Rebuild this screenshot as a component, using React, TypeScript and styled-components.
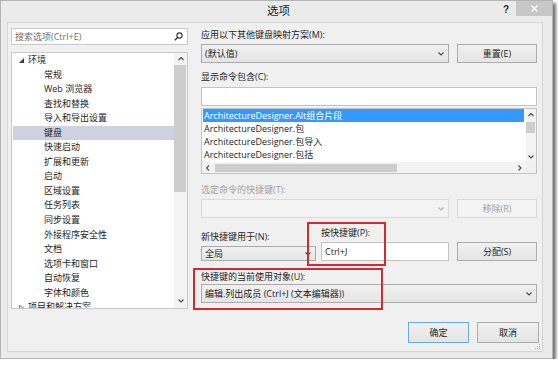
import React from 'react';
import styled, { createGlobalStyle } from 'styled-components';

const uiFont = `"Open Sans", "Noto Sans CJK SC", sans-serif`;

const GlobalStyle = createGlobalStyle`
  * {
    box-sizing: border-box;
  }
  html,
  body {
    margin: 0;
    padding: 0;
    background: #ffffff;
  }
  body {
    font-family: ${uiFont};
    font-size: 9px;
    color: #1e1e1e;
  }
`;

const Window = styled.div`
  width: 553px;
  height: 359px;
  background: #ebebeb;
  border: 1px solid #b4b4b4;
  box-shadow: 3px 3px 3px rgba(0, 0, 0, 0.55);
  display: flex;
  flex-direction: column;
`;

const TitleBar = styled.div`
  height: 21px;
  display: grid;
  grid-template-columns: 1fr auto 1fr;
  align-items: start;
`;

const Title = styled.div`
  grid-column: 2;
  padding-left: 4px;
  font-size: 11.5px;
  line-height: 19px;
  color: #1e1e1e;
`;

const Controls = styled.div`
  justify-self: end;
  display: flex;
  align-items: flex-start;
  gap: 7px;
`;

const HelpGlyph = styled.span`
  font-family: 'Liberation Sans', sans-serif;
  font-weight: bold;
  font-size: 10px;
  line-height: 17px;
  color: #2a2a2a;
`;

const CloseButton = styled.div`
  width: 36px;
  height: 15px;
  background: #c7c7c7;
  display: flex;
  align-items: center;
  justify-content: center;
`;

const Client = styled.div`
  position: relative;
  flex: 1;
  margin: 0 9px 6px 6px;
  background: #f0f0f0;
  border: 1px solid #d6d6d6;
  padding: 5px 3px 0 3px;
  display: flex;
  flex-direction: column;
`;

const Main = styled.div`
  display: grid;
  grid-template-columns: 177px 336px;
  column-gap: 13px;
  height: 281px;
`;

const LeftPanel = styled.div`
  display: flex;
  flex-direction: column;
  gap: 7px;
`;

const SearchBox = styled.div`
  height: 17px;
  background: #ffffff;
  border: 1px solid #c9c9c9;
  display: flex;
  align-items: center;
  justify-content: space-between;
  padding: 0 4px 0 3px;
  color: #6f6f6f;
`;

const Tree = styled.div`
  height: 257px;
  background: #ffffff;
  border: 1px solid #c9c9c9;
  display: grid;
  grid-template-columns: 1fr 13px;
  overflow: hidden;
`;

const TreeItems = styled.div`
  overflow: hidden;
`;

const TreeRow = styled.div<{ $level: number; $selected?: boolean }>`
  height: 14.55px;
  line-height: 14.55px;
  margin-left: 1px;
  padding-left: ${(p) => (p.$level === 0 ? 6 : 31)}px;
  display: flex;
  align-items: center;
  gap: 4px;
  white-space: nowrap;
  background: ${(p) => (p.$selected ? '#cfd0e0' : 'transparent')};
`;

const VScroll = styled.div<{ $thumbTop: number; $thumbHeight: number }>`
  display: flex;
  flex-direction: column;
  align-items: center;
  background: #f3f3f3;

  & > .thumb {
    align-self: stretch;
    margin: ${(p) => p.$thumbTop}px 1px 0 0;
    height: ${(p) => p.$thumbHeight}px;
    background: #cdcdcd;
  }
  & > .spacer {
    flex: 1;
  }
`;

const ArrowCell = styled.div<{ $size: number }>`
  width: 100%;
  height: ${(p) => p.$size}px;
  display: flex;
  align-items: center;
  justify-content: center;
  flex-shrink: 0;
`;

const RightPanel = styled.div`
  position: relative;
  display: flex;
  flex-direction: column;
`;

const Label = styled.div<{ $mt: number; $disabled?: boolean }>`
  margin-top: ${(p) => p.$mt}px;
  height: 12px;
  line-height: 12px;
  white-space: nowrap;
  color: ${(p) => (p.$disabled ? '#a3a3a3' : '#1e1e1e')};
`;

const Row = styled.div<{ $mt: number }>`
  margin-top: ${(p) => p.$mt}px;
  display: flex;
  align-items: flex-end;
  gap: 8px;
`;

const FieldGroup = styled.div<{ $width: number }>`
  width: ${(p) => p.$width}px;
  display: flex;
  flex-direction: column;
  gap: 3px;
`;

const ComboBox = styled.div<{ $mt?: number; $disabled?: boolean }>`
  flex: 1;
  margin-top: ${(p) => p.$mt ?? 0}px;
  height: 19px;
  display: flex;
  align-items: center;
  justify-content: space-between;
  padding: 0 4px 0 3px;
  border: 1px solid ${(p) => (p.$disabled ? '#d9d9d9' : '#acacac')};
  background: ${(p) =>
    p.$disabled ? '#f3f3f3' : 'linear-gradient(#f0f0f0, #e5e5e5)'};
  white-space: nowrap;
`;

const TextBox = styled.div<{ $mt?: number }>`
  margin-top: ${(p) => p.$mt ?? 0}px;
  height: 19px;
  background: #ffffff;
  border: 1px solid #c4c4c4;
  display: flex;
  align-items: center;
  padding-left: 3px;
`;

const Button = styled.div<{ $width: number; $height?: number; $disabled?: boolean; $default?: boolean }>`
  width: ${(p) => p.$width}px;
  height: ${(p) => p.$height ?? 19}px;
  flex-shrink: 0;
  display: flex;
  align-items: center;
  justify-content: center;
  border: 1px solid
    ${(p) => (p.$default ? '#69a8e8' : p.$disabled ? '#d9d9d9' : '#adadad')};
  background: ${(p) =>
    p.$disabled ? '#f3f3f3' : 'linear-gradient(#f0f0f0, #e5e5e5)'};
  color: ${(p) => (p.$disabled ? '#a3a3a3' : '#1e1e1e')};
`;

const CommandList = styled.div`
  margin-top: 2px;
  height: 66px;
  background: #ffffff;
  border: 1px solid #c4c4c4;
  display: grid;
  grid-template-columns: 1fr 10px;
  grid-template-rows: 1fr 11px;
  overflow: hidden;
`;

const CommandItems = styled.div`
  overflow: hidden;
`;

const CommandRow = styled.div<{ $selected?: boolean }>`
  height: 13px;
  line-height: 13px;
  margin: 0 2px 0 1px;
  padding-left: 1px;
  white-space: nowrap;
  background: ${(p) => (p.$selected ? '#3399ff' : 'transparent')};
  color: ${(p) => (p.$selected ? '#ffffff' : '#1e1e1e')};
`;

const HScroll = styled.div`
  display: flex;
  align-items: center;
  background: #f3f3f3;

  & > .thumb {
    margin-left: 1px;
    width: 182px;
    height: 8px;
    background: #cdcdcd;
  }
  & > .spacer {
    flex: 1;
  }
`;

const Corner = styled.div`
  background: #f0f0f0;
`;

const Highlight = styled.div<{ $left: number; $top: number; $width: number; $height: number }>`
  position: absolute;
  left: ${(p) => p.$left}px;
  top: ${(p) => p.$top}px;
  width: ${(p) => p.$width}px;
  height: ${(p) => p.$height}px;
  border: 2px solid #d42a2f;
  pointer-events: none;
`;

const Footer = styled.div`
  margin-top: 13px;
  display: flex;
  justify-content: flex-end;
  gap: 8px;
`;

const Grip = styled.div`
  position: absolute;
  right: 1px;
  bottom: 1px;
  line-height: 0;
`;

type Dir = 'up' | 'down' | 'left' | 'right';

const Chevron = ({ dir, color = '#4a4a4a' }: { dir: Dir; color?: string }) => {
  const vertical = dir === 'up' || dir === 'down';
  const points: Record<Dir, string> = {
    down: '0.5,0.5 3,3 5.5,0.5',
    up: '0.5,3 3,0.5 5.5,3',
    left: '3,0.5 0.5,3 3,5.5',
    right: '0.5,0.5 3,3 0.5,5.5',
  };
  return (
    <svg
      width={vertical ? 6 : 4}
      height={vertical ? 4 : 6}
      viewBox={vertical ? '0 0 6 4' : '0 0 4 6'}
    >
      <polyline points={points[dir]} fill="none" stroke={color} strokeWidth="1.1" />
    </svg>
  );
};

const SearchIcon = () => (
  <svg width="9" height="9" viewBox="0 0 9 9">
    <circle cx="5.5" cy="3.5" r="2.6" fill="none" stroke="#333" strokeWidth="1.1" />
    <line x1="3.6" y1="5.4" x2="0.8" y2="8.2" stroke="#333" strokeWidth="1.4" />
  </svg>
);

const Twisty = ({ open }: { open: boolean }) =>
  open ? (
    <svg width="5" height="5" viewBox="0 0 5 5">
      <polygon points="5,0 5,5 0,5" fill="#3c3c3c" />
    </svg>
  ) : (
    <svg width="5" height="6" viewBox="0 0 5 6">
      <polygon points="0.5,0.5 4.5,3 0.5,5.5" fill="none" stroke="#555" strokeWidth="0.8" />
    </svg>
  );

const treeChildren = [
  '常规',
  'Web 浏览器',
  '查找和替换',
  '导入和导出设置',
  '键盘',
  '快速启动',
  '扩展和更新',
  '启动',
  '区域设置',
  '任务列表',
  '同步设置',
  '外接程序安全性',
  '文档',
  '选项卡和窗口',
  '自动恢复',
  '字体和颜色',
];

const commands = [
  'ArchitectureDesigner.Alt组合片段',
  'ArchitectureDesigner.包',
  'ArchitectureDesigner.包导入',
  'ArchitectureDesigner.包括',
  'ArchitectureDesigner.从组合片段中删除',
];

export default function App() {
  return (
    <>
      <GlobalStyle />
      <Window>
        <TitleBar>
          <Title>选项</Title>
          <Controls>
            <HelpGlyph>?</HelpGlyph>
            <CloseButton>
              <svg width="7" height="7" viewBox="0 0 7 7">
                <line x1="0.5" y1="0.5" x2="6.5" y2="6.5" stroke="#fff" strokeWidth="1.3" />
                <line x1="6.5" y1="0.5" x2="0.5" y2="6.5" stroke="#fff" strokeWidth="1.3" />
              </svg>
            </CloseButton>
          </Controls>
        </TitleBar>

        <Client>
          <Main>
            <LeftPanel>
              <SearchBox>
                <span>搜索选项(Ctrl+E)</span>
                <SearchIcon />
              </SearchBox>
              <Tree>
                <TreeItems>
                  <TreeRow $level={0}>
                    <Twisty open />
                    <span>环境</span>
                  </TreeRow>
                  {treeChildren.map((name) => (
                    <TreeRow key={name} $level={1} $selected={name === '键盘'}>
                      {name}
                    </TreeRow>
                  ))}
                  <TreeRow $level={0}>
                    <Twisty open={false} />
                    <span>项目和解决方案</span>
                  </TreeRow>
                </TreeItems>
                <VScroll $thumbTop={0} $thumbHeight={127}>
                  <ArrowCell $size={12}>
                    <Chevron dir="up" />
                  </ArrowCell>
                  <div className="thumb" />
                  <div className="spacer" />
                  <ArrowCell $size={14}>
                    <Chevron dir="down" />
                  </ArrowCell>
                </VScroll>
              </Tree>
            </LeftPanel>

            <RightPanel>
              <Label $mt={1}>应用以下其他键盘映射方案(M):</Label>
              <Row $mt={3}>
                <ComboBox>
                  <span>(默认值)</span>
                  <Chevron dir="down" />
                </ComboBox>
                <Button $width={80}>重置(E)</Button>
              </Row>

              <Label $mt={8}>显示命令包含(C):</Label>
              <TextBox $mt={4} />
              <CommandList>
                <CommandItems>
                  {commands.map((c, i) => (
                    <CommandRow key={c} $selected={i === 0}>
                      {c}
                    </CommandRow>
                  ))}
                </CommandItems>
                <VScroll $thumbTop={2} $thumbHeight={11}>
                  <ArrowCell $size={11}>
                    <Chevron dir="up" />
                  </ArrowCell>
                  <div className="thumb" />
                  <div className="spacer" />
                  <ArrowCell $size={11}>
                    <Chevron dir="down" />
                  </ArrowCell>
                </VScroll>
                <HScroll>
                  <ArrowCell $size={11} style={{ width: 12 }}>
                    <Chevron dir="left" />
                  </ArrowCell>
                  <div className="thumb" />
                  <div className="spacer" />
                  <ArrowCell $size={11} style={{ width: 12 }}>
                    <Chevron dir="right" />
                  </ArrowCell>
                </HScroll>
                <Corner />
              </CommandList>

              <Label $mt={10} $disabled>
                选定命令的快捷键(T):
              </Label>
              <Row $mt={3}>
                <ComboBox $disabled>
                  <span />
                  <Chevron dir="down" color="#b5b5b5" />
                </ComboBox>
                <Button $width={80} $disabled>
                  移除(R)
                </Button>
              </Row>

              <Row $mt={9}>
                <FieldGroup $width={115}>
                  <Label $mt={0}>新快捷键用于(N):</Label>
                  <ComboBox>
                    <span>全局</span>
                    <Chevron dir="down" />
                  </ComboBox>
                </FieldGroup>
                <FieldGroup $width={128} style={{ marginLeft: -3 }}>
                  <Label $mt={0}>按快捷键(P):</Label>
                  <TextBox>Ctrl+J</TextBox>
                </FieldGroup>
                <Button $width={80}>分配(S)</Button>
              </Row>

              <Label $mt={10}>快捷键的当前使用对象(U):</Label>
              <ComboBox $mt={1} style={{ flex: 'none' }}>
                <span>编辑.列出成员 (Ctrl+J (文本编辑器))</span>
                <Chevron dir="down" />
              </ComboBox>

              <Highlight $left={106} $top={194} $width={79} $height={44} />
              <Highlight $left={-8} $top={240} $width={190} $height={42} />
            </RightPanel>
          </Main>

          <Footer>
            <Button $width={61} $height={21} $default>
              确定
            </Button>
            <Button $width={62} $height={21}>
              取消
            </Button>
          </Footer>

          <Grip>
            <svg width="6" height="6" viewBox="0 0 6 6">
              <rect x="4" y="0" width="1.2" height="1.2" fill="#b8b8b8" />
              <rect x="2" y="2" width="1.2" height="1.2" fill="#b8b8b8" />
              <rect x="4" y="2" width="1.2" height="1.2" fill="#b8b8b8" />
              <rect x="0" y="4" width="1.2" height="1.2" fill="#b8b8b8" />
              <rect x="2" y="4" width="1.2" height="1.2" fill="#b8b8b8" />
              <rect x="4" y="4" width="1.2" height="1.2" fill="#b8b8b8" />
            </svg>
          </Grip>
        </Client>
      </Window>
    </>
  );
}
